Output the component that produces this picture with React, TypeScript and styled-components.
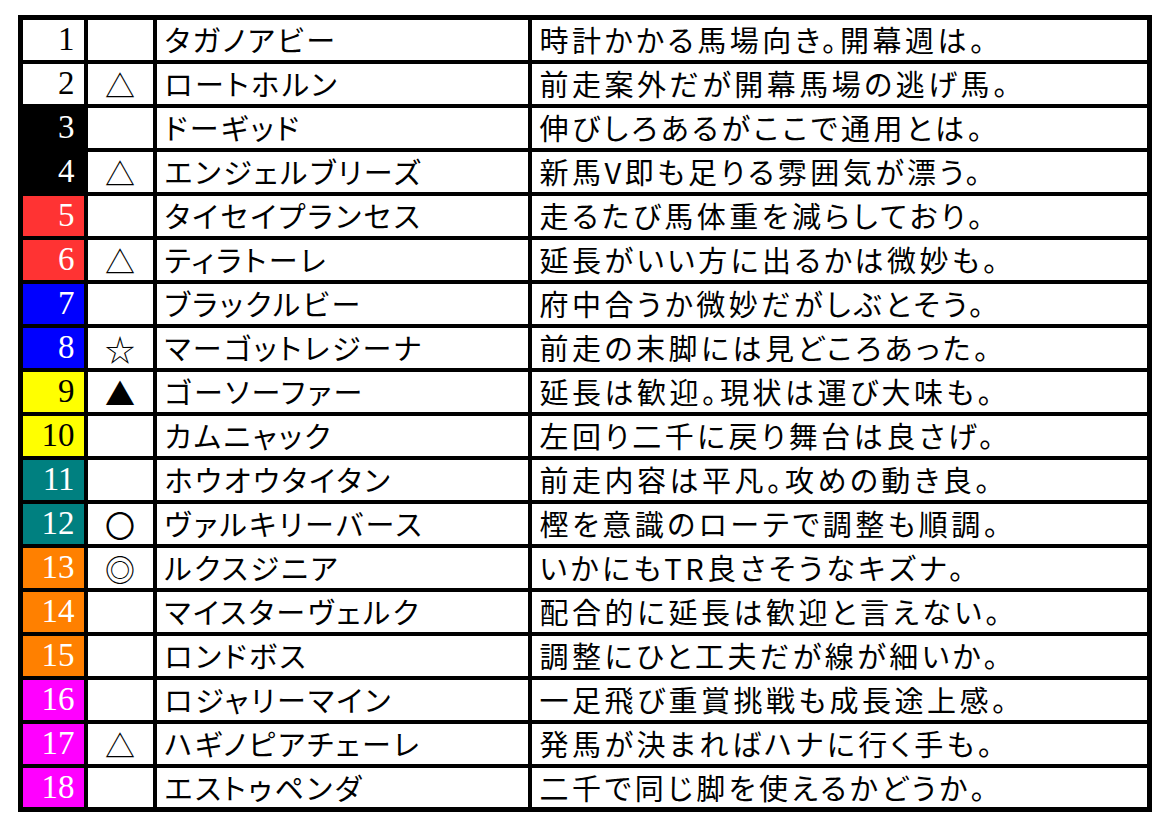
import React from "react";
import styled, { createGlobalStyle } from "styled-components";

const Global = createGlobalStyle`
  html, body { margin: 0; padding: 0; background: #ffffff; }
  body { width: 1170px; height: 830px; overflow: hidden; }
`;

const Page = styled.div`
  padding: 15px 0 0 18px;
`;

const Table = styled.table`
  border-collapse: collapse;
  table-layout: fixed;
  width: 1129px;
  border: 5px solid #000;
`;

const Col = styled.col<{ $w: number }>`
  width: ${(p) => p.$w}px;
`;

const Row = styled.tr`
  height: 44px;
`;

const Cell = styled.td`
  border: 4px solid #000;
  padding: 0;
  line-height: 1;
  vertical-align: middle;
  white-space: nowrap;
  overflow: hidden;
  color: #000;
`;

const NumCell = styled(Cell)<{ $bg: string; $fg: string }>`
  background: ${(p) => p.$bg};
  color: ${(p) => p.$fg};
  font-family: "Liberation Serif", "Times New Roman", serif;
  font-size: 33px;
  text-align: right;
  padding-right: 9px;
`;

const MarkCell = styled(Cell)`
  font-family: "Noto Sans CJK JP", "DejaVu Sans", sans-serif;
  font-size: 30px;
  text-align: center;
`;

const NameCell = styled(Cell)`
  font-family: "Noto Sans CJK JP", sans-serif;
  font-size: 29px;
  letter-spacing: 2.5px;
  font-feature-settings: "palt";
  padding-left: 8px;
`;

const CommentCell = styled(Cell)`
  font-family: "Noto Sans CJK JP", sans-serif;
  font-size: 29px;
  letter-spacing: 3.5px;
  font-feature-settings: "palt";
  padding-left: 8px;
`;

type Horse = { n: number; mark: string; name: string; comment: string };

const horses: Horse[] = [
  { n: 1, mark: "", name: "タガノアビー", comment: "時計かかる馬場向き。開幕週は。" },
  { n: 2, mark: "△", name: "ロートホルン", comment: "前走案外だが開幕馬場の逃げ馬。" },
  { n: 3, mark: "", name: "ドーギッド", comment: "伸びしろあるがここで通用とは。" },
  { n: 4, mark: "△", name: "エンジェルブリーズ", comment: "新馬V即も足りる雰囲気が漂う。" },
  { n: 5, mark: "", name: "タイセイプランセス", comment: "走るたび馬体重を減らしており。" },
  { n: 6, mark: "△", name: "ティラトーレ", comment: "延長がいい方に出るかは微妙も。" },
  { n: 7, mark: "", name: "ブラックルビー", comment: "府中合うか微妙だがしぶとそう。" },
  { n: 8, mark: "☆", name: "マーゴットレジーナ", comment: "前走の末脚には見どころあった。" },
  { n: 9, mark: "▲", name: "ゴーソーファー", comment: "延長は歓迎。現状は運び大味も。" },
  { n: 10, mark: "", name: "カムニャック", comment: "左回り二千に戻り舞台は良さげ。" },
  { n: 11, mark: "", name: "ホウオウタイタン", comment: "前走内容は平凡。攻めの動き良。" },
  { n: 12, mark: "〇", name: "ヴァルキリーバース", comment: "樫を意識のローテで調整も順調。" },
  { n: 13, mark: "◎", name: "ルクスジニア", comment: "いかにもTR良さそうなキズナ。" },
  { n: 14, mark: "", name: "マイスターヴェルク", comment: "配合的に延長は歓迎と言えない。" },
  { n: 15, mark: "", name: "ロンドボス", comment: "調整にひと工夫だが線が細いか。" },
  { n: 16, mark: "", name: "ロジャリーマイン", comment: "一足飛び重賞挑戦も成長途上感。" },
  { n: 17, mark: "△", name: "ハギノピアチェーレ", comment: "発馬が決まればハナに行く手も。" },
  { n: 18, mark: "", name: "エストゥペンダ", comment: "二千で同じ脚を使えるかどうか。" },
];

const frameColors: { bg: string; fg: string }[] = [
  { bg: "#ffffff", fg: "#000000" },
  { bg: "#000000", fg: "#ffffff" },
  { bg: "#ff3333", fg: "#ffffff" },
  { bg: "#0000ff", fg: "#ffffff" },
  { bg: "#ffff00", fg: "#000000" },
  { bg: "#008080", fg: "#ffffff" },
  { bg: "#ff8000", fg: "#ffffff" },
  { bg: "#ff00ff", fg: "#ffffff" },
];

const frameOf = (n: number) => {
  if (n <= 2) return 0;
  if (n <= 4) return 1;
  if (n <= 6) return 2;
  if (n <= 8) return 3;
  if (n <= 10) return 4;
  if (n <= 12) return 5;
  if (n <= 15) return 6;
  return 7;
};

export default function App() {
  return (
    <>
      <Global />
      <Page>
        <Table>
          <colgroup>
            <Col $w={65} />
            <Col $w={69} />
            <Col $w={375} />
            <Col $w={620} />
          </colgroup>
          <tbody>
            {horses.map((h) => {
              const c = frameColors[frameOf(h.n)];
              return (
                <Row key={h.n}>
                  <NumCell $bg={c.bg} $fg={c.fg}>{h.n}</NumCell>
                  <MarkCell>{h.mark}</MarkCell>
                  <NameCell>{h.name}</NameCell>
                  <CommentCell>{h.comment}</CommentCell>
                </Row>
              );
            })}
          </tbody>
        </Table>
      </Page>
    </>
  );
}
